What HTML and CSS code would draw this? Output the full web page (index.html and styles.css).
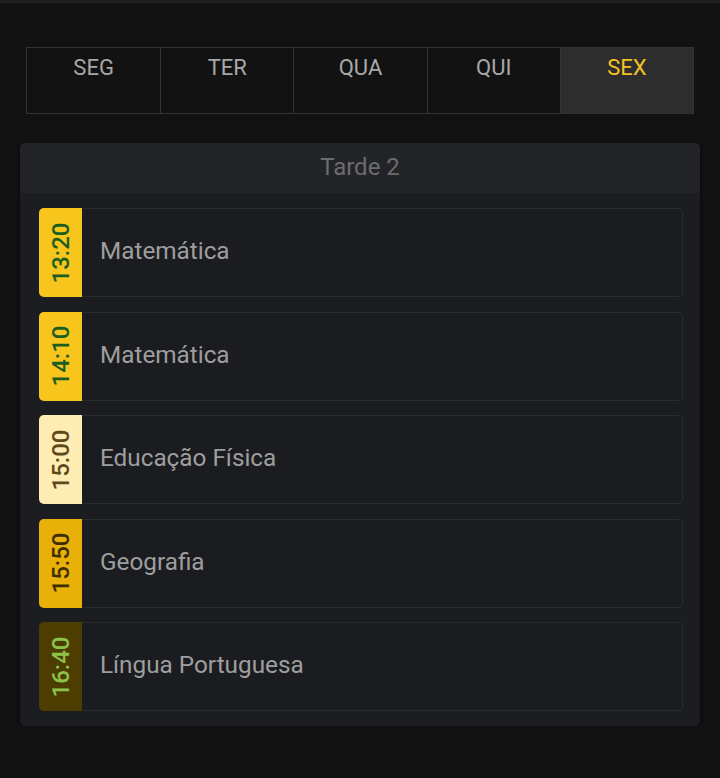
FILE: index.html
```html
<!DOCTYPE html>
<html lang="pt">
<head>
<meta charset="utf-8">
<link rel="stylesheet" href="styles.css">
</head>
<body>
<div class="topbar"></div>
<nav class="tabs">
  <div class="tab">SEG</div>
  <div class="tab">TER</div>
  <div class="tab">QUA</div>
  <div class="tab">QUI</div>
  <div class="tab active">SEX</div>
</nav>
<section class="card">
  <header class="card-head">Tarde 2</header>
  <div class="card-body">
    <div class="row"><div class="time t-yellow"><span>13:20</span></div><div class="subject">Matemática</div></div>
    <div class="row"><div class="time t-yellow"><span>14:10</span></div><div class="subject">Matemática</div></div>
    <div class="row"><div class="time t-cream"><span>15:00</span></div><div class="subject">Educação Física</div></div>
    <div class="row"><div class="time t-amber"><span>15:50</span></div><div class="subject">Geografia</div></div>
    <div class="row"><div class="time t-olive"><span>16:40</span></div><div class="subject">Língua Portuguesa</div></div>
  </div>
</section>
</body>
</html>
```
FILE: styles.css
```css
html, body {
  margin: 0;
  padding: 0;
  background: #121212;
  font-family: Roboto, "Liberation Sans", sans-serif;
}
.topbar {
  height: 3px;
  background: #1f1f1f;
}
.tabs {
  display: grid;
  grid-template-columns: repeat(5, 1fr);
  margin: 44px 26px 0;
  border: 1px solid #333;
  height: 65px;
}
.tab {
  border-left: 1px solid #333;
  color: #a8a8a8;
  font-size: 22px;
  text-align: center;
  padding-top: 7px;
  line-height: 26px;
}
.tab:first-child { border-left: none; }
.tab.active {
  background: #2d2d2d;
  color: #f4c124;
}
.card {
  margin: 29px 20px 0;
  background: #1c1d20;
  border-radius: 5px;
  box-shadow: 0 2px 4px rgba(0,0,0,0.5);
  overflow: hidden;
}
.card-head {
  height: 50px;
  background: #232428;
  color: #6b6c6f;
  font-size: 24px;
  line-height: 48px;
  text-align: center;
}
.card-body {
  display: flex;
  flex-direction: column;
  gap: 14.5px;
  padding: 15px 17px 15px 19px;
}
.row {
  display: flex;
  align-items: center;
  height: 89px;
  box-sizing: border-box;
  border: 1px solid #2a2b2e;
  border-radius: 4px;
  background: #1b1c1f;
}
.time {
  align-self: stretch;
  width: 43px;
  margin: -1px 0 -1px -1px;
  border-radius: 5px 0 0 5px;
  display: flex;
  align-items: center;
  justify-content: center;
  flex-shrink: 0;
}
.time span {
  transform: rotate(-90deg);
  font-size: 24px;
  font-weight: 500;
  white-space: nowrap;
  padding-top: 2px;
}
.t-yellow { background: #f8c51c; color: #1b5e20; }
.t-cream { background: #ffecb3; color: #5d4a1a; }
.t-amber { background: #e8b008; color: #3e2f00; }
.t-olive { background: #4d3d00; color: #8bc34a; }
.subject {
  padding-left: 18px;
  padding-bottom: 4px;
  color: #9e9e9e;
  font-size: 24.3px;
}
```
